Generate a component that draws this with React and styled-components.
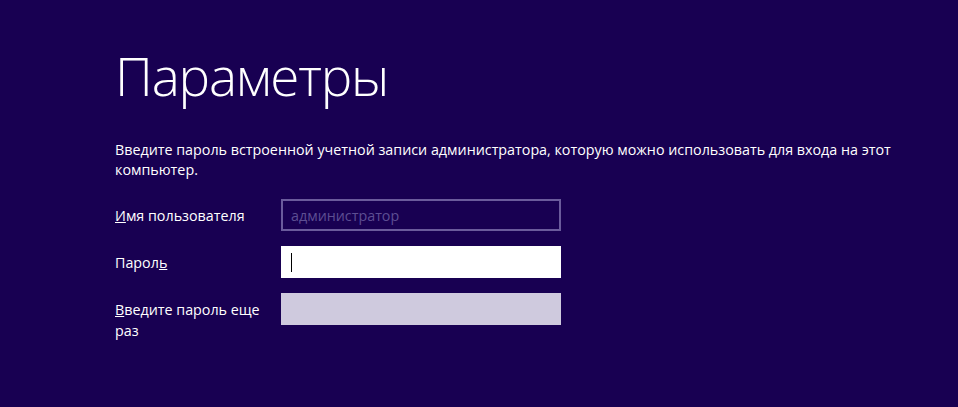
import React from 'react';
import styled, { createGlobalStyle } from 'styled-components';

const GlobalStyle = createGlobalStyle`
    html, body {
        margin: 0;
        padding: 0;
        background: #180052;
    }
    body {
        font-family: "Open Sans", "Noto Sans", "Liberation Sans", sans-serif;
        color: #ffffff;
    }
`;

const Page = styled.div`
    width: 958px;
    height: 407px;
    box-sizing: border-box;
    padding: 43px 0 0 115px;
    background: #180052;
    overflow: hidden;
`;

const Title = styled.h1`
    font-size: 53px;
    font-weight: 300;
    line-height: 66px;
    margin: 0;
    letter-spacing: -1.2px;
`;

const Intro = styled.p`
    width: 790px;
    font-size: 14.3px;
    line-height: 20px;
    margin: 31px 0 0 0;
`;

const Form = styled.div`
    display: grid;
    grid-template-columns: 166px 280px;
    row-gap: 15px;
    margin-top: 19px;
`;

const Label = styled.label`
    font-size: 14.3px;
    line-height: 21px;
    padding-top: 6px;
    width: 150px;
`;

const Field = styled.div`
    height: 32px;
    box-sizing: border-box;
    display: flex;
    align-items: center;
    padding-left: ${p => (p.variant === 'readonly' ? '8px' : '10px')};
    font-size: 14.3px;
    background: ${p =>
        p.variant === 'readonly' ? 'transparent' :
        p.variant === 'active' ? '#ffffff' : '#cfcade'};
    border: ${p => (p.variant === 'readonly' ? '2px solid #6a5b9c' : 'none')};
    color: #5d4e92;
`;

const Caret = styled.span`
    display: block;
    width: 1px;
    height: 19px;
    background: #000;
`;

const App = () => (
    <>
        <GlobalStyle />
        <Page>
            <Title>Параметры</Title>
            <Intro>
                Введите пароль встроенной учетной записи администратора, которую можно использовать для входа на этот компьютер.
            </Intro>
            <Form>
                <Label><u>И</u>мя пользователя</Label>
                <Field variant="readonly">администратор</Field>
                <Label>Парол<u>ь</u></Label>
                <Field variant="active"><Caret /></Field>
                <Label><u>В</u>ведите пароль еще<br />раз</Label>
                <Field variant="disabled" />
            </Form>
        </Page>
    </>
);

export default App;
